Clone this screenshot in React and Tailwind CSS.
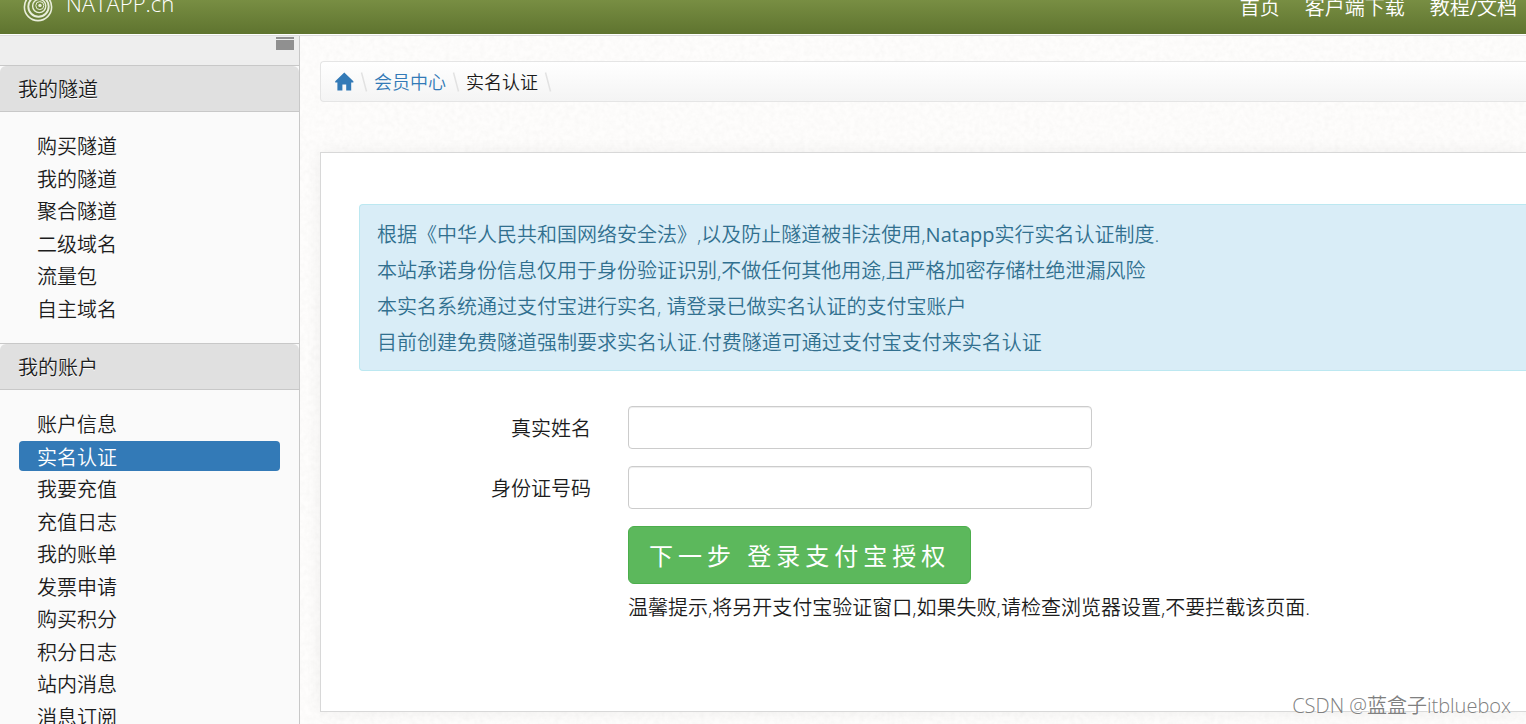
const tunnelItems = ["购买隧道", "我的隧道", "聚合隧道", "二级域名", "流量包", "自主域名"];

const accountItems = [
  "账户信息",
  "实名认证",
  "我要充值",
  "充值日志",
  "我的账单",
  "发票申请",
  "购买积分",
  "积分日志",
  "站内消息",
  "消息订阅",
];

function Logo() {
  return (
    <svg viewBox="0 0 30 30" className="size-[30px] shrink-0" fill="none" stroke="#e9eedb" aria-hidden="true">
      <circle cx="15" cy="15" r="13.6" strokeWidth="1.6" />
      <circle cx="15.5" cy="14.5" r="10.2" strokeWidth="1.9" />
      <circle cx="16.2" cy="14" r="6.6" strokeWidth="1.4" />
      <circle cx="16.8" cy="13.6" r="4" strokeWidth="1" />
      <circle cx="17" cy="13.4" r="1.7" fill="#e9eedb" stroke="none" />
    </svg>
  );
}

function Separator() {
  return (
    <svg viewBox="0 0 8 20" className="h-5 w-2 shrink-0" fill="none" aria-hidden="true">
      <path d="M1.5 0.5L6.5 19.5" stroke="#e2e2e2" strokeWidth="1.5" />
    </svg>
  );
}

function PaperTexture() {
  return (
    <svg className="absolute inset-0 -z-10 size-full" aria-hidden="true">
      <filter id="paper" x="0" y="0" width="100%" height="100%">
        <feTurbulence type="fractalNoise" baseFrequency="0.2" numOctaves="3" seed="7" />
        <feColorMatrix values="0 0 0 0 0.5  0 0 0 0 0.5  0 0 0 0 0.48  0.1 0.1 0 0 -0.075" />
      </filter>
      <rect width="100%" height="100%" fill="#fefdfc" />
      <rect width="100%" height="100%" filter="url(#paper)" />
    </svg>
  );
}

function MenuSection({ title, items, active }) {
  return (
    <section>
      <div className="border-y border-[#c8c8c8]">
        <h2 className="rounded-t-md bg-[#e0e0e0] px-[18px] pt-[7px] pb-[5px] text-xl leading-[33px] [text-shadow:0_1px_0_#fff]">
          {title}
        </h2>
      </div>
      <ul className="px-[19px] py-[18px] text-xl">
        {items.map((item) => (
          <li key={item} className="h-[1.625em]">
            <a
              href="#"
              className={
                item === active
                  ? "block h-[30px] rounded bg-[#337ab7] px-[18px] pt-0.5 leading-[30px] text-white"
                  : "block h-[30px] px-[18px] pt-0.5 leading-[30px]"
              }
            >
              {item}
            </a>
          </li>
        ))}
      </ul>
    </section>
  );
}

function Field({ id, label }) {
  return (
    <>
      <label htmlFor={id} className="pt-0.5 text-right">
        {label}
      </label>
      <input
        id={id}
        type="text"
        className="h-[43px] w-full max-w-[464px] rounded border border-[#ccc] bg-white px-3 shadow-[inset_0_1px_1px_rgba(0,0,0,0.075)] outline-none"
      />
    </>
  );
}

export default function App() {
  return (
    <div className="relative flex h-screen flex-col overflow-hidden bg-white font-['Open_Sans','Noto_Sans_CJK_SC',sans-serif] font-[350] text-[#1c1c1c]">
      <header className="h-[34px] shrink-0 overflow-hidden bg-linear-to-b from-[#788e43] to-[#5f742f] text-white">
        <div className="-mt-5 flex h-[54px] items-center justify-between pr-[9px] pl-[23px]">
          <a href="#" className="flex items-center gap-[13px] text-[22px] font-light">
            <Logo />
            <span className="pb-2">NATAPP.ch</span>
          </a>
          <nav className="flex gap-[25px] pt-px text-xl">
            <a href="#">首页</a>
            <a href="#">客户端下载</a>
            <a href="#">
              教程<span className="font-normal">/</span>文档
            </a>
          </nav>
        </div>
      </header>

      <div className="mt-px flex min-h-0 grow border-t border-[#ddd]">
        <aside className="w-[300px] shrink-0 overflow-hidden border-r border-[#c8c8c8] bg-[#fafafa]">
          <div className="flex h-[29px] justify-end bg-[#eee] pt-px pr-[5px]">
            <button type="button" aria-label="收起菜单" className="flex h-[13px] w-[18px] flex-col gap-px">
              <span className="h-0.5 w-full bg-[#909090]" />
              <span className="w-full grow bg-[#909090]" />
            </button>
          </div>
          <MenuSection title="我的隧道" items={tunnelItems} />
          <MenuSection title="我的账户" items={accountItems} active="实名认证" />
        </aside>

        <main className="relative isolate min-w-0 grow overflow-hidden pt-[25px] pl-5">
          <PaperTexture />
          <nav
            aria-label="面包屑"
            className="flex h-[41px] items-center rounded-l border border-r-0 border-[#e5e5e5] bg-linear-to-b from-white to-[#f4f4f4] pl-[14px] text-lg"
          >
            <a href="#" aria-label="首页" className="mr-[5px]">
              <svg viewBox="0 0 20 20" className="size-5" fill="#337ab7" aria-hidden="true">
                <path d="M9.3 0.4L18.4 9.3V10.4H16.2V18.6H11.2V12.6H7.4V18.6H2.4V10.4H0.2V9.3Z" />
              </svg>
            </a>
            <Separator />
            <a href="#" className="mx-[6px] text-[#337ab7]">
              会员中心
            </a>
            <Separator />
            <span className="mx-[6px]">实名认证</span>
            <Separator />
          </nav>

          <div className="mt-[50px] border border-r-0 border-[#d8d8d8] bg-white pt-[51px] pb-[89px] pl-[38px] text-xl shadow-[0_0_16px_rgba(0,0,0,0.06)]">
            <div
              role="note"
              className="rounded-l border border-r-0 border-[#bce8f1] bg-[#d9edf7] px-[17px] pt-3 pb-[9px] leading-[36px] text-[#31708f]"
            >
              <p>
                根据《中华人民共和国网络安全法》,以及防止隧道被非法使用,<span className="font-normal">Natapp</span>
                实行实名认证制度.
              </p>
              <p>本站承诺身份信息仅用于身份验证识别,不做任何其他用途,且严格加密存储杜绝泄漏风险</p>
              <p>本实名系统通过支付宝进行实名, 请登录已做实名认证的支付宝账户</p>
              <p>目前创建免费隧道强制要求实名认证.付费隧道可通过支付宝支付来实名认证</p>
            </div>

            <form className="mt-[35px] grid grid-cols-[232px_1fr] items-center gap-x-[37px] gap-y-[17px]">
              <Field id="real-name" label="真实姓名" />
              <Field id="id-number" label="身份证号码" />
              <div className="col-start-2">
                <button
                  type="button"
                  className="h-[58px] rounded-md border border-[#4cae4c] bg-[#5cb85c] px-5 pt-0.5 text-2xl font-normal tracking-[5px] text-white"
                >
                  下一步 登录支付宝授权
                </button>
                <p className="mt-2.5">温馨提示,将另开支付宝验证窗口,如果失败,请检查浏览器设置,不要拦截该页面.</p>
              </div>
            </form>
          </div>
        </main>
      </div>

      <p className="absolute right-[15px] bottom-1 text-xl text-[#808080] [text-shadow:-1px_-1px_0_#fff]">
        CSDN @蓝盒子itbluebox
      </p>
    </div>
  );
}
